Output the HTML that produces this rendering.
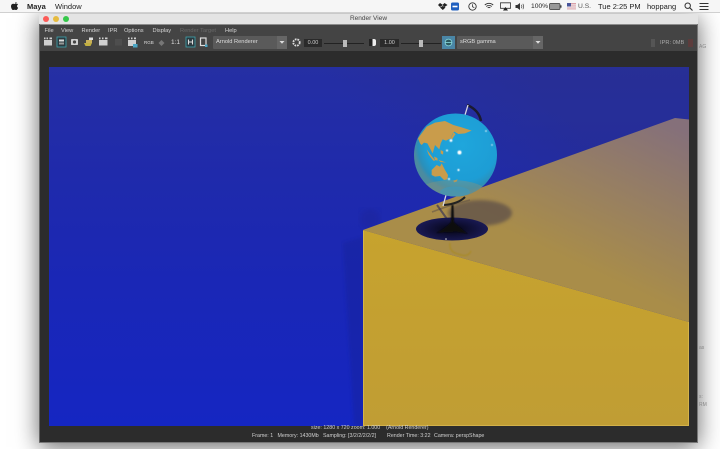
<!DOCTYPE html>
<html>
<head>
<meta charset="utf-8">
<style>
html,body{margin:0;padding:0;background:#fff;}
body{width:720px;height:449px;position:relative;overflow:hidden;font-family:"Liberation Sans",sans-serif;}
.t{position:absolute;white-space:nowrap;}
#bar{position:absolute;z-index:5;left:0;top:0;width:720px;height:12px;background:#f6f6f6;border-bottom:1px solid #d0d0d0;font-size:7.5px;color:#222;}
#bar .t{top:1.5px;line-height:10px;}
#win{position:absolute;left:39px;top:14px;width:659px;height:429px;background:#2c2c2c;box-shadow:0 4px 22px rgba(0,0,0,.6);}
#title{position:absolute;left:0;top:0;width:659px;height:10px;background:#e4e4e4;border-bottom:1px solid #8c8c8c;}
#title .t{left:0;width:659px;text-align:center;font-size:6.5px;line-height:10px;color:#444;}
.dot{position:absolute;top:2px;width:6px;height:6px;border-radius:50%;}
#tools{position:absolute;left:0;top:11px;width:659px;height:26px;background:#444;}
.m{position:absolute;top:2px;font-size:5.7px;line-height:8px;color:#d4d4d4;white-space:nowrap;}
.b{position:absolute;font-size:5.5px;line-height:9px;color:#ddd;white-space:nowrap;}
.drop{position:absolute;top:11px;height:13px;background:#5a5a5a;border-radius:1px;color:#ddd;font-size:5.7px;line-height:13px;padding-left:3px;box-sizing:border-box;}
.num{position:absolute;top:14px;height:8px;background:#2a2a2a;color:#ccc;font-size:5.5px;line-height:8px;text-align:center;}
.st{position:absolute;font-size:5.3px;line-height:7px;color:#d0d0d0;white-space:nowrap;}
.edge{position:absolute;font-size:5px;color:#888;line-height:7px;}
</style>
</head>
<body>
<div id="bar">
<svg style="position:absolute;left:10px;top:1px" width="9" height="10" viewBox="0 0 9 10"><path d="M6.6 1c-.7.1-1.5.6-1.7 1.5.8 0 1.6-.6 1.7-1.5zM4.6 3c-.5 0-1-.3-1.6-.3C1.800 2.700 1 3.800 1 5.200 1 7 2.200 9 3.100 9c.5 0 .9-.3 1.500-.3s.9.3 1.500.3c.9 0 1.700-1.400 2-2.300-1.400-.7-1.400-2.600 0-3.200-.4-.6-1-.9-1.700-.9-.7 0-1.200.3-1.800.3z" fill="#222"/></svg>
<span class="t" style="left:27px;font-weight:bold">Maya</span>
<span class="t" style="left:55px">Window</span>
<svg style="position:absolute;left:438px;top:2px" width="30" height="9" viewBox="0 0 30 9">
<path d="M2 1 5 3 2 5 0 3zM6.500 1 9.500 3 6.500 5 4.500 3zM2 5.500 4.800 4 7.500 5.500 4.800 8z" fill="#222"/>
<rect x="13" y="0.500" width="8" height="8" rx="1.500" fill="#1f5fbf"/><rect x="14.500" y="3.700" width="5" height="1.600" fill="#fff"/>
</svg>
<svg style="position:absolute;left:468px;top:2px" width="9" height="9" viewBox="0 0 9 9"><circle cx="4.500" cy="4.500" r="3.700" fill="none" stroke="#333" stroke-width=".9"/><path d="M4.500 2.200V4.800L6.300 5.600" fill="none" stroke="#333" stroke-width=".8"/></svg>
<svg style="position:absolute;left:484px;top:2px" width="10" height="8" viewBox="0 0 10 8"><path d="M.8 3C3.300.7 6.700.7 9.200 3M2.300 4.500C3.900 3.100 6.100 3.100 7.700 4.500M3.700 5.900C4.500 5.200 5.500 5.200 6.300 5.900" fill="none" stroke="#333" stroke-width=".9"/></svg>
<svg style="position:absolute;left:500px;top:2px" width="11" height="9" viewBox="0 0 11 9"><path d="M.500.800H10.500V6.300H.500z" fill="none" stroke="#333" stroke-width=".8"/><path d="M3 8.500 5.500 5 8 8.500z" fill="#222"/></svg>
<svg style="position:absolute;left:515px;top:2px" width="10" height="9" viewBox="0 0 10 9"><path d="M.500 3H2.300L5 1V8L2.300 6H.500z" fill="#333"/><path d="M6.300 2.800C7 3.800 7 5.200 6.300 6.200M7.800 1.800C8.900 3.300 8.900 5.700 7.800 7.200" fill="none" stroke="#444" stroke-width=".7"/></svg>
<span class="t" style="left:531px;font-size:6.700px">100%</span>
<svg style="position:absolute;left:549px;top:3px" width="13" height="7" viewBox="0 0 13 7"><rect x=".500" y=".500" width="10.500" height="6" rx="1" fill="#999" stroke="#333" stroke-width=".7"/><rect x="11.300" y="2.300" width="1.200" height="2.400" fill="#333"/></svg>
<svg style="position:absolute;left:567px;top:3px" width="9" height="7" viewBox="0 0 9 7"><rect width="9" height="7" fill="#d9a0a8"/><rect y="1.400" width="9" height="1" fill="#f4f4f4"/><rect y="3.500" width="9" height="1" fill="#f4f4f4"/><rect y="5.600" width="9" height="1" fill="#f4f4f4"/><rect width="4" height="3.500" fill="#49559a"/></svg>
<span class="t" style="left:578px;font-size:6.700px;color:#555">U.S.</span>
<span class="t" style="left:598px">Tue 2:25 PM</span>
<span class="t" style="left:647px">hoppang</span>
<svg style="position:absolute;left:684px;top:2px" width="9" height="9" viewBox="0 0 9 9"><circle cx="3.700" cy="3.700" r="2.700" fill="none" stroke="#333"/><path d="M5.700 5.700 8.500 8.500" stroke="#333" stroke-width="1.100"/></svg>
<svg style="position:absolute;left:699px;top:2px" width="10" height="9" viewBox="0 0 10 9"><path d="M.500 1.500H9.500M.500 4.500H9.500M.500 7.500H9.500" stroke="#333"/></svg>
</div>

<div id="win">
<div id="title"><span class="t">Render View</span>
<span class="dot" style="left:4px;background:#fc5b57"></span>
<span class="dot" style="left:14px;background:#e6bb3f"></span>
<span class="dot" style="left:24px;background:#35c84a"></span>
</div>
<div id="tools">
<span class="m" style="left:5.500px">File</span>
<span class="m" style="left:22px">View</span>
<span class="m" style="left:42.500px">Render</span>
<span class="m" style="left:69px">IPR</span>
<span class="m" style="left:85px">Options</span>
<span class="m" style="left:113.500px">Display</span>
<span class="m" style="left:141px;color:#6a6a6a">Render Target</span>
<span class="m" style="left:186px">Help</span>

<svg style="position:absolute;left:0;top:10px" width="175" height="16" viewBox="0 0 175 16">
<g fill="#d0d0d0">
<rect x="5" y="5" width="8" height="5.500"/><path d="M5 2.500h1.500v1.800H5zM7.500 2.500h1.500v1.800H7.500zM10.500 2.500h2.500v1.800h-2.500z"/>
<rect x="18" y="2" width="9" height="10" fill="#2b3a40" stroke="#3fa5ad" stroke-width=".8"/><rect x="20" y="4.500" width="5" height="2" fill="#ddd"/><rect x="20" y="7.500" width="5" height="2" fill="#999"/>
<rect x="32" y="4" width="7" height="6" rx=".8"/><circle cx="35.500" cy="7" r="1.600" fill="#444"/>
<path d="M47 5h6v3h-6z" fill="#c9b15a"/><path d="M45 8h8l-1.500 3h-5z" fill="#c2b040"/><path d="M50 2.500h4v2.500h-4z" fill="#ddd"/>
<rect x="60" y="5" width="8.500" height="5.500"/><path d="M60 2.500h1.500v1.800H60zM63 2.500h1.500v1.800H63zM66 2.500h2.500v1.800H66z"/>
<rect x="76" y="4" width="7" height="6.500" fill="#4e4e4e"/>
<rect x="89" y="5" width="8" height="6"/><path d="M89 2.500h1.500v1.800H89zM92 2.500h1.500v1.800H92zM95 2.500h2v1.800h-2z"/><path d="M94 9h4.500v3.500H94z" fill="#4ba6c4"/>
</g>
<path d="M119.500 8l3-3 3 3-3 3z" fill="#777"/>
<rect x="147" y="2" width="9" height="10" fill="#2b3a40" stroke="#3fa5ad" stroke-width=".8"/><path d="M149.500 4.500V9.500M153.500 4.500V9.500M149.500 7H153.500" stroke="#ddd" stroke-width="1.100"/>
<rect x="161.500" y="3" width="5.500" height="7.500" fill="none" stroke="#ddd" stroke-width="1.200"/><rect x="166" y="9.500" width="2.500" height="2.500" fill="#4ba6c4"/>
</svg>
<span class="b" style="left:105px;top:13px;font-size:4.500px">RGB</span>
<span class="b" style="left:132px;top:13px;font-size:6.500px">1:1</span>

<div class="drop" style="left:174px;width:74px">Arnold Renderer<svg style="position:absolute;right:0;top:0;background:#666" width="10" height="13" viewBox="0 0 10 13"><path d="M2.500 5h5L5 7.800z" fill="#ddd"/></svg></div>
<svg style="position:absolute;left:253px;top:13px" width="9" height="9" viewBox="0 0 9 9"><circle cx="4.500" cy="4.500" r="3.200" fill="none" stroke="#ddd" stroke-width="1.800" stroke-dasharray="1.700 .9"/></svg>
<div class="num" style="left:265px;width:18px">0.00</div>
<div style="position:absolute;left:285px;top:18px;width:40px;height:1px;background:#222"></div>
<div style="position:absolute;left:304px;top:15px;width:4px;height:7px;background:#bbb"></div>
<svg style="position:absolute;left:329px;top:13px" width="9" height="9" viewBox="0 0 9 9"><rect x="1" y="1" width="7" height="7" rx="2" fill="#eee"/><rect x="1" y="1" width="3.500" height="7" fill="#222"/></svg>
<div class="num" style="left:341px;width:19px">1.00</div>
<div style="position:absolute;left:362px;top:18px;width:40px;height:1px;background:#222"></div>
<div style="position:absolute;left:380px;top:15px;width:4px;height:7px;background:#bbb"></div>
<div style="position:absolute;left:403px;top:11px;width:13px;height:13px;background:#4a86a6"></div>
<svg style="position:absolute;left:405px;top:13px" width="9" height="9" viewBox="0 0 9 9"><circle cx="4.500" cy="4.500" r="3.400" fill="#2c5a60" stroke="#8adbe0" stroke-width=".8"/><path d="M1.500 4.500h6" stroke="#8adbe0" stroke-width=".8"/></svg>
<div class="drop" style="left:418px;width:86px">sRGB gamma<svg style="position:absolute;right:0;top:0;background:#666" width="10" height="13" viewBox="0 0 10 13"><path d="M2.500 5h5L5 7.800z" fill="#ddd"/></svg></div>
<div style="position:absolute;left:612px;top:14px;width:4px;height:8px;background:#555"></div>
<span class="b" style="left:621px;top:14px;color:#aaa;font-size:5.700px">IPR: 0MB</span>
<div style="position:absolute;left:649px;top:14px;width:5px;height:8px;background:#5c3c3c"></div>
</div>

<svg style="position:absolute;left:10px;top:53px" width="640" height="359" viewBox="49 67 640 359">
<defs>
<linearGradient id="wall" x1="0" y1="0" x2="0" y2="1">
<stop offset="0" stop-color="#252fa3"/><stop offset=".3" stop-color="#1f2aab"/><stop offset=".6" stop-color="#1a27b6"/><stop offset="1" stop-color="#1526c2"/>
</linearGradient>
<linearGradient id="wallh" gradientUnits="userSpaceOnUse" x1="500" y1="50" x2="400" y2="150">
<stop offset="0" stop-color="#2b2f82" stop-opacity=".4"/><stop offset="1" stop-color="#2b2f82" stop-opacity="0"/>
</linearGradient>
<linearGradient id="top" gradientUnits="userSpaceOnUse" x1="660" y1="120" x2="590" y2="270">
<stop offset="0" stop-color="#85707a"/><stop offset=".5" stop-color="#977f62"/><stop offset="1" stop-color="#a98d49"/>
</linearGradient>
<linearGradient id="front" x1="0" y1="0" x2="0" y2="1">
<stop offset="0" stop-color="#c7a32e"/><stop offset="1" stop-color="#c09d34"/>
</linearGradient>
<radialGradient id="gl" gradientUnits="userSpaceOnUse" cx="462" cy="145" r="48">
<stop offset="0" stop-color="#1fa6dc"/><stop offset=".75" stop-color="#1d9dd5"/><stop offset=".92" stop-color="#2b8fb9"/><stop offset="1" stop-color="#4b8ba0"/>
</radialGradient>
<radialGradient id="bs" gradientUnits="userSpaceOnUse" cx="452" cy="229" r="36" gradientTransform="translate(0 149) scale(1 .35)">
<stop offset="0" stop-color="#050510"/><stop offset=".5" stop-color="#0f0f35"/><stop offset="1" stop-color="#1a1a55"/>
</radialGradient>
<clipPath id="gc"><circle cx="455.500" cy="155" r="41.500"/></clipPath>
<filter id="b1"><feGaussianBlur stdDeviation="1.500"/></filter>
<filter id="b2"><feGaussianBlur stdDeviation=".4"/></filter>
<filter id="b3"><feGaussianBlur stdDeviation="3"/></filter>
</defs>
<rect x="49" y="67" width="640" height="359" fill="url(#wall)"/>
<rect x="49" y="67" width="640" height="200" fill="url(#wallh)"/>
<path d="M343 243 363 237V426H354z" fill="#15219a" opacity=".45" filter="url(#b1)"/>
<circle cx="370" cy="219" r="10" fill="#1a2394" opacity=".4" filter="url(#b3)"/>
<path d="M363 230 675 118 689 119.500V322L363 230z" fill="url(#top)"/>
<path d="M363 230 689 322V426H363z" fill="url(#front)"/>
<path d="M363.500 231V425.500H688.500V322" fill="none" stroke="#d9b850" stroke-width=".8"/>
<path d="M450 243Q449 252 458 254Q468 258 471 251" fill="none" stroke="#a98a1e" stroke-width="1.500" opacity=".6" filter="url(#b2)"/>
<!-- shadow on table -->
<ellipse cx="480" cy="213" rx="32" ry="13" fill="#665648" opacity=".85" filter="url(#b1)"/>
<path d="M432 212 Q450 205 470 200" fill="none" stroke="#665648" stroke-width="1.500" opacity=".6"/>
<path d="M437 205 447 219" fill="none" stroke="#2a2a58" stroke-width="2" opacity=".6"/>
<!-- arm -->
<path d="M467 105 Q479 110 481 121" fill="none" stroke="#1a1a30" stroke-width="2.500"/>
<path d="M468 105 465 115" stroke="#d8d8e4" stroke-width="1.300"/>
<path d="M444 205 Q458 204 465 197" fill="none" stroke="#222" stroke-width="2"/>
<path d="M446 195 443 206" stroke="#d8d8e4" stroke-width="1.300"/>
<!-- base -->
<path d="M418 231Q452 246 487 231" fill="none" stroke="#d4b030" stroke-width="1"/>
<ellipse cx="452" cy="229" rx="36" ry="11.500" fill="url(#bs)"/>
<path d="M451.500 205H453.500L454 222Q460 228 468 234Q456 231 452.500 232Q447 232 436 233Q446 228 451 222z" fill="#08080f" filter="url(#b2)"/>
<circle cx="446" cy="239" r=".8" fill="#ddd"/>
<!-- globe -->
<circle cx="455.500" cy="155" r="41.500" fill="url(#gl)"/>
<g clip-path="url(#gc)">
<g transform="translate(420 110) scale(.3333)" fill="#c99c4c" filter="url(#b2)">
<path d="M-6 85 20 50 45 38 75 33 100 45 125 52 155 62 135 70 115 72 103 65 97 72 92 85 78 92 68 88 62 100 58 118 45 105 38 130 30 115 22 100 12 98 5 105 0 100z"/>
<path d="M100 68 107 72 96 88 92 86z"/>
<path d="M20 118 36 140 46 152 40 152 26 134z"/>
<path d="M42 140 52 144 53 152 45 150z"/>
<path d="M55 150 66 153 78 158 62 156z"/>
<path d="M62 120 70 124 69 134 62 130z"/>
<path d="M35 180 50 165 60 170 65 160 75 180 84 195 82 208 72 210 60 198 45 200 35 195z"/>
<path d="M100 212 113 208 110 215 102 217z"/>
</g>
<ellipse cx="452" cy="194" rx="36" ry="14" fill="#8c9478" opacity=".4"/>
<ellipse cx="455" cy="192" rx="15" ry="5.500" fill="#3b9ac0" opacity=".6"/>
</g>
<g fill="#fff" filter="url(#b2)">
<circle cx="459.500" cy="152.500" r="2"/>
<circle cx="451" cy="140.500" r="1.400"/>
<circle cx="447" cy="150.500" r="1"/>
<circle cx="458.500" cy="170" r="1.100"/>
<circle cx="449" cy="179" r="1"/>
<circle cx="486" cy="131" r=".8"/>
<circle cx="492" cy="145" r=".7"/>
</g>
</svg>

<div class="st" style="left:272px;top:411px">size: 1280 x 720 zoom: 1.000 &nbsp;&nbsp;&nbsp;(Arnold Renderer)</div>
<div class="st" style="left:213px;top:419px">Frame: 1</div>
<div class="st" style="left:238.500px;top:419px">Memory: 1430Mb</div>
<div class="st" style="left:284px;top:419px">Sampling: [3/2/2/2/2/2]</div>
<div class="st" style="left:348px;top:419px">Render Time: 3:22</div>
<div class="st" style="left:395px;top:419px">Camera: perspShape</div>
<div style="position:absolute;right:0;top:10px;width:1px;height:419px;background:#777"></div>
<div style="position:absolute;left:0;top:10px;width:1px;height:419px;background:#666"></div>
<div style="position:absolute;left:0;bottom:0;width:659px;height:1px;background:#777"></div>
</div>
<span class="edge t" style="left:699px;top:44px">AG</span>
<span class="edge t" style="left:699px;top:345px">as</span>
<span class="edge t" style="left:699px;top:394px">s:</span>
<span class="edge t" style="left:699px;top:402px">RM</span>
</body>
</html>
